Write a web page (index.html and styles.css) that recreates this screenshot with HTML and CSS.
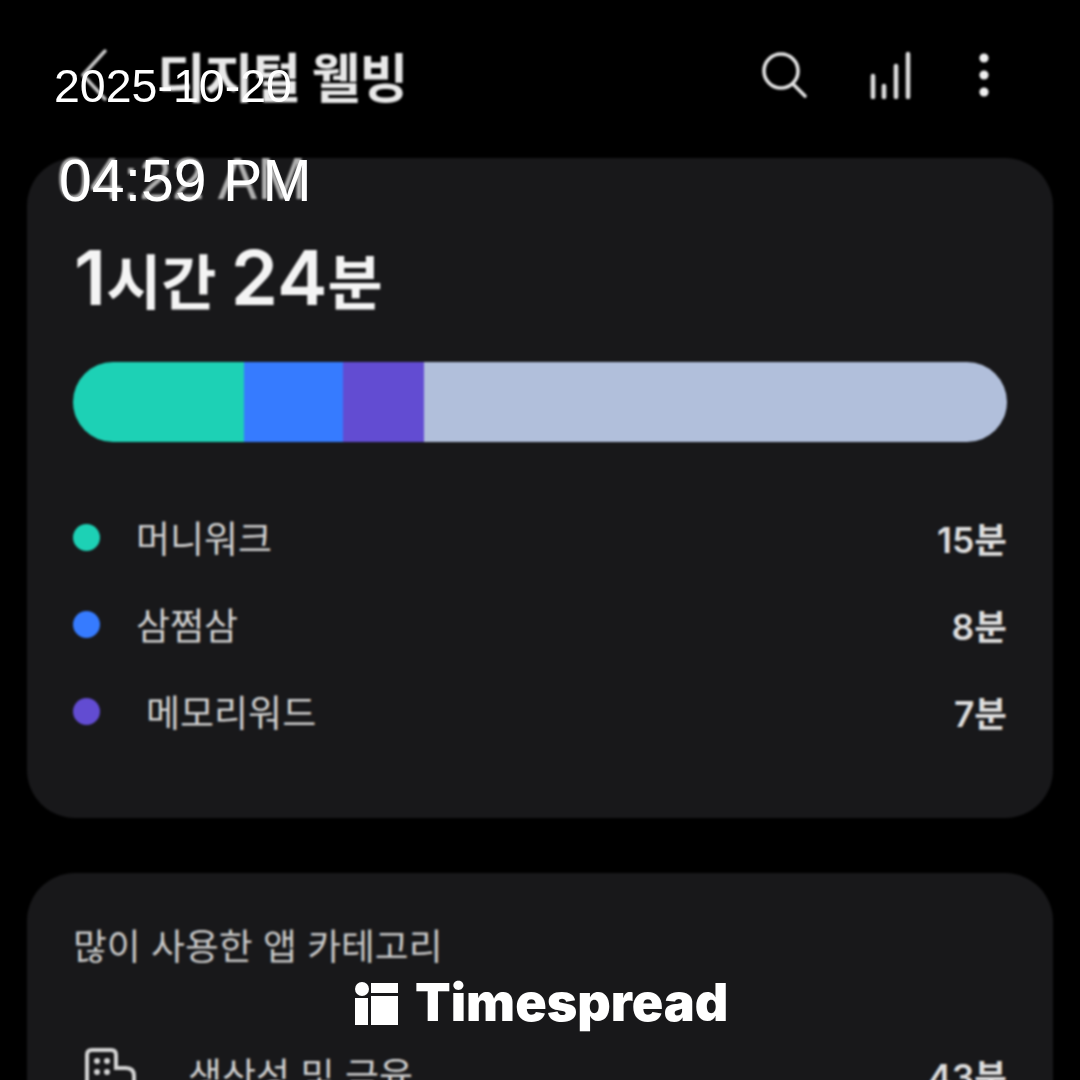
FILE: index.html
```html
<!DOCTYPE html>
<html lang="ko">
  <head>
    <title>디지털 웰빙</title>
    <meta charset="UTF-8">
    <meta name="viewport" content="width=device-width, initial-scale=1.0">
    <link rel="stylesheet" href="styles.css">
  </head>
  <body>
    <div class="screen">
      <div class="app">
        <header class="topbar">
          <div class="topbar-left">
            <svg class="back-icon" width="36" height="64" viewBox="0 0 36 64">
              <path d="M28 8 L6 32 L28 56" fill="none" stroke="#c8c8c8" stroke-width="3.5" stroke-linecap="round" stroke-linejoin="round"/>
            </svg>
            <h1 class="title">디지털 웰빙</h1>
          </div>
          <div class="topbar-icons">
            <svg class="icon-search" width="48" height="48" viewBox="0 0 48 48">
              <circle cx="21" cy="20" r="17" fill="none" stroke="#e4e4e4" stroke-width="3.6"/>
              <path d="M33 33 L45 45" stroke="#e4e4e4" stroke-width="3.6" stroke-linecap="round"/>
            </svg>
            <svg class="icon-signal" width="42" height="48" viewBox="0 0 42 48">
              <path d="M3 25 V46 M14 35 V46 M26 15 V46 M38 3 V46" stroke="#dcdcdc" stroke-width="4.6" stroke-linecap="round"/>
            </svg>
            <svg width="14" height="46" viewBox="0 0 14 46">
              <circle cx="7" cy="6" r="4.6" fill="#f0f0f0"/>
              <circle cx="7" cy="23" r="4.6" fill="#f0f0f0"/>
              <circle cx="7" cy="40" r="4.6" fill="#f0f0f0"/>
            </svg>
          </div>
        </header>

        <section class="card usage-card">
          <div class="stale-time">04:22 AM</div>
          <div class="total"><b>1</b>시간 <b>24</b>분</div>
          <div class="bar">
            <div class="seg seg-green"></div>
            <div class="seg seg-blue"></div>
            <div class="seg seg-purple"></div>
            <div class="seg seg-rest"></div>
          </div>
          <ul class="app-list">
            <li class="app-row">
              <span class="dot seg-green"></span>
              <span class="app-name">머니워크</span>
              <span class="app-time">15분</span>
            </li>
            <li class="app-row">
              <span class="dot seg-blue"></span>
              <span class="app-name">삼쩜삼</span>
              <span class="app-time">8분</span>
            </li>
            <li class="app-row">
              <span class="dot seg-purple"></span>
              <span class="app-name app-name-indent">메모리워드</span>
              <span class="app-time">7분</span>
            </li>
          </ul>
        </section>

        <section class="card category-card">
          <h2 class="card-title">많이 사용한 앱 카테고리</h2>
          <div class="category-row">
            <svg class="category-icon" width="54" height="54" viewBox="0 0 54 54">
              <path d="M4 54 V8 Q4 3 9 3 H28 Q33 3 33 8 V21 H43 Q51 21 51 29 V54" fill="none" stroke="#d4d4d4" stroke-width="4"/>
              <g fill="#d4d4d4">
                <circle cx="14" cy="14" r="3"/>
                <circle cx="24" cy="14" r="3"/>
                <circle cx="14" cy="25" r="3"/>
                <circle cx="24" cy="25" r="3"/>
              </g>
            </svg>
            <span class="category-name">생산성 및 금융</span>
            <span class="app-time">43분</span>
          </div>
        </section>
      </div>

      <div class="stamp">
        <div class="stamp-date">2025-10-20</div>
        <div class="stamp-time">04:59 PM</div>
      </div>

      <div class="brand">
        <svg width="44" height="44" viewBox="0 0 44 44">
          <circle cx="8" cy="8" r="7" fill="#fff"/>
          <rect x="1" y="17" width="13" height="27" fill="#fff"/>
          <rect x="17" y="2" width="27" height="10" fill="#fff"/>
          <rect x="17" y="15" width="27" height="29" fill="#fff"/>
        </svg>
        <span class="brand-name">Timespread</span>
      </div>
    </div>
  </body>
</html>
```

FILE: styles.css
```css
/* Digital wellbeing screen */
* {
  box-sizing: border-box;
}

body {
  margin: 0;
  background-color: #000;
  font-family: Inter, "Noto Sans CJK KR", sans-serif;
}

.screen {
  position: relative;
  width: 1080px;
  height: 1080px;
  overflow: hidden;
}

.app {
  display: flex;
  flex-direction: column;
  gap: 55px;
  padding: 0 27px;
  filter: blur(1px);
}

.topbar {
  display: flex;
  justify-content: space-between;
  align-items: center;
  height: 158px;
  margin-bottom: -55px;
  padding: 0 62px 8px 50px;
}

.topbar-left {
  display: flex;
  align-items: center;
  gap: 44px;
}

.title {
  margin: 0;
  font-size: 53px;
  font-weight: 700;
  letter-spacing: -1px;
  color: #e8e8e8;
}

.topbar-icons {
  display: flex;
  align-items: center;
  gap: 65px;
}

.icon-search {
  margin-right: -3px;
}

.card {
  background-color: #18181a;
  border-radius: 48px;
  padding: 0 46px;
}

.usage-card {
  position: relative;
  height: 660px;
  padding-top: 81px;
}

.stale-time {
  position: absolute;
  left: 30px;
  top: -13px;
  font-family: "Liberation Sans", sans-serif;
  font-size: 59px;
  color: #b0b0b0;
}

.total {
  height: 77px;
  padding-left: 1px;
  font-size: 60px;
  font-weight: 700;
  line-height: 77px;
  color: #f4f4f4;
}

.total b {
  font-size: 76px;
  font-weight: 600;
}

.bar {
  display: flex;
  height: 80px;
  margin-top: 46px;
  border-radius: 40px;
  overflow: hidden;
}

.seg-green {
  background-color: #1dd1b5;
}

.seg-blue {
  background-color: #367bff;
}

.seg-purple {
  background-color: #624cd2;
}

.seg-rest {
  background-color: #b1bfdb;
}

.seg.seg-green {
  width: 171px;
}

.seg.seg-blue {
  width: 99px;
}

.seg.seg-purple {
  width: 81px;
}

.seg.seg-rest {
  flex: 1;
}

.app-list {
  display: flex;
  flex-direction: column;
  gap: 27px;
  margin: 0;
  margin-top: 65px;
  padding: 0;
  list-style: none;
}

.app-row {
  display: flex;
  align-items: center;
  height: 60px;
}

.dot {
  width: 27px;
  height: 27px;
  border-radius: 50%;
  margin-right: 36px;
}

.app-name {
  flex: 1;
  font-size: 37px;
  color: #d0d0d0;
}

.app-name-indent {
  padding-left: 10px;
}

.app-time {
  font-size: 35.5px;
  font-weight: 600;
  color: #dedede;
}

.category-card {
  height: 400px;
  padding-top: 44px;
}

.card-title {
  margin: 0;
  font-size: 36.8px;
  font-weight: 400;
  color: #c8c8c8;
}

.category-row {
  display: flex;
  align-items: center;
  margin-top: 76px;
  padding-left: 10px;
}

.category-name {
  flex: 1;
  margin-left: 51px;
  font-size: 37px;
  color: #d0d0d0;
}

.stamp {
  position: absolute;
  left: 54px;
  top: 56px;
  font-family: "Liberation Sans", sans-serif;
  color: #fff;
}

.stamp-date {
  font-size: 46.5px;
  line-height: 60px;
}

.stamp-time {
  margin-top: 35px;
  padding-left: 5px;
  font-size: 59px;
  line-height: 60px;
}

.brand {
  position: absolute;
  left: 354px;
  top: 971px;
  display: flex;
  align-items: center;
  gap: 17px;
}

.brand-name {
  font-family: Inter, sans-serif;
  font-size: 52px;
  font-weight: 900;
  color: #fff;
}
```
